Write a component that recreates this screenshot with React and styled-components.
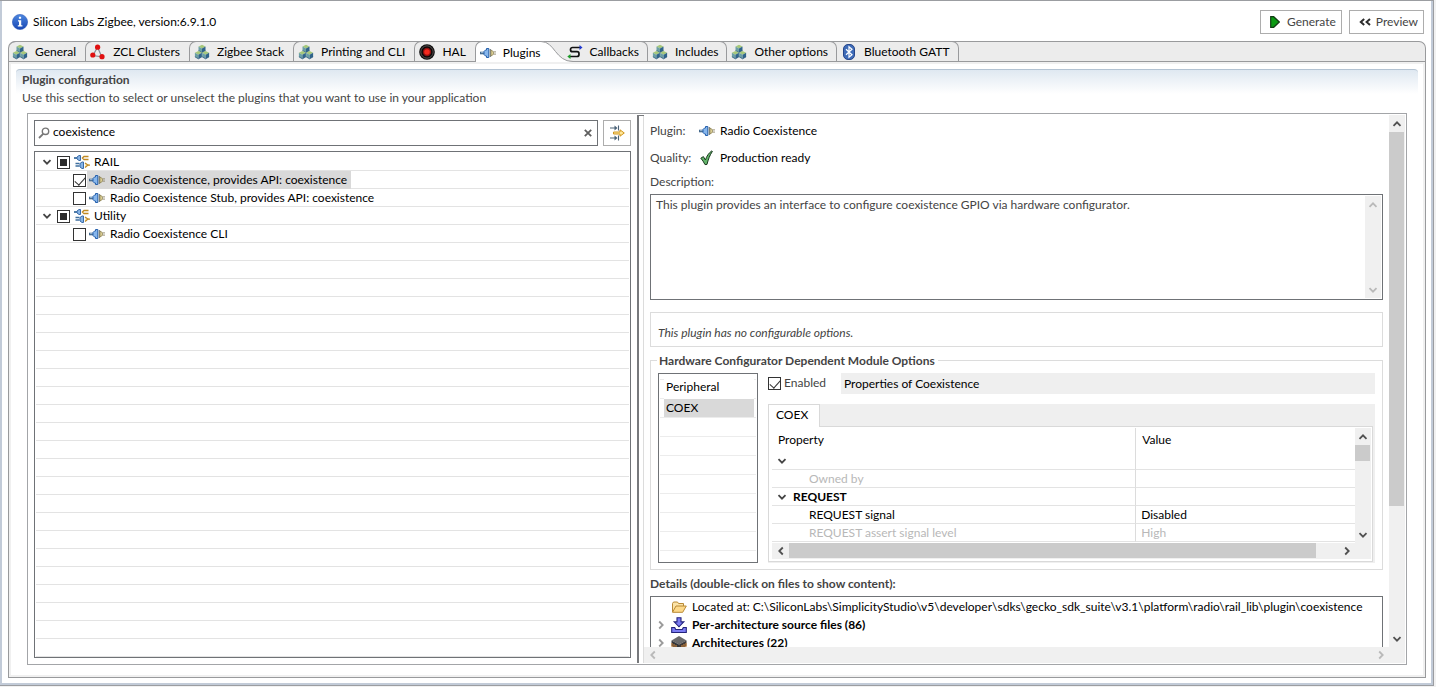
import React from 'react';
import styled, { createGlobalStyle, css } from 'styled-components';

const GlobalStyle = createGlobalStyle`
  * { box-sizing: border-box; }
  body {
    margin: 0;
    background: #f1f1f1;
    color: #000;
    font: 12px/18px Lato, "Open Sans", sans-serif;
  }
  button, input, textarea { font: inherit; color: inherit; margin: 0; }
  svg { display: block; flex: none; }
`;

const line = '#e3e3e3';
const frame = '#999a9c';
const well = '#6f7276';
const label = '#444';

/* ---------- icons ---------- */

const InfoIcon = () => (
  <svg width="16" height="16" viewBox="0 0 16 16">
    <defs>
      <linearGradient id="info" x1="0" y1="0" x2="0" y2="1">
        <stop offset="0" stopColor="#4d88e0" />
        <stop offset="1" stopColor="#1746b4" />
      </linearGradient>
    </defs>
    <circle cx="8" cy="8" r="7.6" fill="url(#info)" stroke="#2a58b8" strokeWidth=".6" />
    <path d="M6.9 2.800h2.200v2H6.900zM6 6.200h3.200v5H10.400v1.300H5.800v-1.300h1.200V7.400H6z" fill="#fff" />
  </svg>
);

const Cube = ({ x, y }) => (
  <g transform={`translate(${x} ${y})`}>
    <path d="M0 2L3.500 .2 7 2 3.500 4z" fill="#a6c87a" />
    <path d="M0 2l3.500 2v4L0 6z" fill="#6b9fa4" />
    <path d="M7 2L3.500 4v4L7 6z" fill="#2f648a" />
    <path d="M0 6l3.500 2L7 6" fill="none" stroke="#27557c" strokeWidth=".8" />
  </g>
);

const CubesIcon = () => (
  <svg width="16" height="16" viewBox="0 0 16 16">
    <Cube x={4.5} y={0.6} />
    <Cube x={0.9} y={6.8} />
    <Cube x={8.1} y={6.8} />
  </svg>
);

const ClusterIcon = () => (
  <svg width="16" height="16" viewBox="0 0 16 16">
    <path d="M7.500 3.200L2.800 11.600l9 1.200z" fill="none" stroke="#8a8f98" strokeWidth="1.200" />
    <circle cx="7.600" cy="3.200" r="2.600" fill="#e01010" />
    <circle cx="2.800" cy="11" r="2.600" fill="#e01010" />
    <circle cx="12" cy="12.700" r="2.600" fill="#e01010" />
  </svg>
);

const HalIcon = () => (
  <svg width="16" height="16" viewBox="0 0 16 16">
    <circle cx="8" cy="8" r="7.800" fill="#0a0a0a" />
    <circle cx="8" cy="8" r="6.200" fill="none" stroke="#6d6262" strokeWidth=".8" />
    <circle cx="8" cy="8" r="4.200" fill="#8e0f0f" />
    <circle cx="8" cy="8" r="2.800" fill="#f42a1f" />
  </svg>
);

const PlugIcon = () => (
  <svg width="16" height="16" viewBox="0 0 16 16">
    <path d="M0 8h5" stroke="#45698c" strokeWidth="2.600" />
    <path d="M1 7.600h4" stroke="#a9c6e4" strokeWidth=".8" />
    <path d="M4 6.500l1.500-1.500h1V3.500h2.300v9H6.500V11h-1L4 9.500z" fill="#86b6ec" stroke="#2660ac" />
    <path d="M10.300 3.900v8.200" stroke="#6c7a80" strokeWidth="1.200" />
    <path d="M11 5l2.300 1.600v2.800L11 11z" fill="#ecdfa0" stroke="#8f8458" strokeWidth=".9" />
    <path d="M13.500 6.900H16M13.500 9.100H16" stroke="#8b8268" strokeWidth=".9" />
  </svg>
);

const PlugGroupIcon = () => (
  <svg width="16" height="16" viewBox="0 0 16 16">
    <path d="M0 4h3" stroke="#3f6f9e" strokeWidth="1.800" />
    <path d="M3 3l2-1.500h1.500v5H5L3 5z" fill="#86b4e6" stroke="#3a6ba8" />
    <path d="M14.500 2.500H10L8.500 4 10 5.500h4.500" fill="none" stroke="#c08a24" strokeWidth="1.400" />
    <path d="M1.500 9.500h4M1.500 12h4" stroke="#3f6f9e" strokeWidth="1.300" />
    <path d="M6 9.500L8 8h1.500v6.500H8L6 13z" fill="#86b4e6" stroke="#3a6ba8" />
    <path d="M11 9l3 2-3 2.500" fill="#f6e9bb" stroke="#c08a24" strokeWidth="1.200" />
    <path d="M14 11.200h2" stroke="#c08a24" strokeWidth="1.200" />
  </svg>
);

const CallbackIcon = () => (
  <svg width="16" height="16" viewBox="0 0 16 16">
    <path d="M13 3.500H5.500a2 2 0 0 0-2 2v.2a2 2 0 0 0 2 2H10a2 2 0 0 1 2 2v.8a2 2 0 0 1-2 2H3" fill="none" stroke="#111" strokeWidth="1.700" />
    <path d="M12.500 1l3 2.500-3 2.500z" fill="#2038d0" />
    <path d="M3.500 10L.3 12.500l3.200 2.500z" fill="#1c9a28" />
  </svg>
);

const BluetoothIcon = () => (
  <svg width="16" height="16" viewBox="0 0 16 16">
    <rect x="2.500" y=".5" width="11" height="15" rx="4.500" fill="#3f6cb8" stroke="#27468a" />
    <path d="M5 5.200l6 5.600L8 13.300V2.700l3 2.500-6 5.600" fill="none" stroke="#fff" strokeWidth="1.200" />
  </svg>
);

const PlayIcon = () => (
  <svg width="10" height="12" viewBox="0 0 10 12">
    <path d="M.7.7h3L9.300 6 3.700 11.300h-3z" fill="#0c9a12" stroke="#123d14" strokeWidth="1.200" />
  </svg>
);

const RewindIcon = () => (
  <svg width="12" height="8" viewBox="0 0 12 8">
    <path d="M5.200 1L1.800 4l3.400 3M11 1L7.600 4 11 7" fill="none" stroke="#2d2d2d" strokeWidth="2" />
  </svg>
);

const SearchIcon = () => (
  <svg width="12" height="12" viewBox="0 0 12 12">
    <circle cx="7.500" cy="4.300" r="3.200" fill="none" stroke="#777" strokeWidth="1.400" />
    <path d="M5.200 6.800L1 11" stroke="#777" strokeWidth="1.800" />
  </svg>
);

const CloseIcon = () => (
  <svg width="8" height="8" viewBox="0 0 8 8">
    <path d="M.8.8l6.400 6.400M7.200.8L.8 7.200" stroke="#5f5f5f" strokeWidth="1.800" />
  </svg>
);

const ExpandAllIcon = () => (
  <svg width="16" height="16" viewBox="0 0 16 16">
    <path d="M1 3h6M1 13h6M9.500 .500v5M9.500 10.500v5" stroke="#4b6277" strokeWidth="1.100" />
    <path d="M5.500 .500L8.500 3 5.500 5.500zM5.500 10.500l3 2.500-3 2.500z" fill="#4b6277" />
    <path d="M4.500 7h6.500V4.800L15.300 8 11 11.200V9H4.500z" fill="#ffe79a" stroke="#d0941c" strokeWidth="1" />
  </svg>
);

const QualityIcon = () => (
  <svg width="16" height="16" viewBox="0 0 16 16">
    <path d="M1.800 8.200l2.600-1.600 2 3.400C7.600 6.400 9.600 3 12.800.9l.6.500C10.800 5 9.200 9.600 8 14.400L6 14.600C4.800 12 3.400 10 1.800 8.200z" fill="#62b46a" stroke="#1c3a20" />
  </svg>
);

const FolderIcon = () => (
  <svg width="16" height="16" viewBox="0 0 16 16">
    <path d="M1.500 13V4.500l1-1.500h4l1 1.500h5V7" fill="#fbe3a8" stroke="#b98a35" />
    <path d="M1.500 13.300L5 7h10.300l-3.600 6.300z" fill="#fdd98a" stroke="#b98a35" />
  </svg>
);

const DownloadIcon = () => (
  <svg width="16" height="16" viewBox="0 0 16 16">
    <path d="M.7 10.500h3l1 2h6.600l1-2h3v5H.7z" fill="#7b7bf2" stroke="#23237c" strokeWidth="1.100" />
    <path d="M6 .7h4v4.200h2.800L8 9.800 3.200 4.900H6z" fill="#7b7bf2" stroke="#23237c" strokeWidth="1.100" />
  </svg>
);

const ChipIcon = () => (
  <svg width="16" height="16" viewBox="0 0 16 16">
    <path d="M.5 5.500L8 1l7.500 4.500L8 9.500z" fill="#6a6a6a" />
    <path d="M.5 5.500L8 9.500v6L.5 11z" fill="#33363a" />
    <path d="M15.500 5.500L8 9.500v6l7.500-4.500z" fill="#3f3a38" />
    <path d="M1 8v4M3 9v4M5 10v4M11 10v4M13 9v4M15 8v4" stroke="#d98a3a" />
  </svg>
);

const turns = { down: 0, left: 90, up: 180, right: 270 };
const Chevron = ({ dir = 'down', color = '#444' }) => (
  <svg width="10" height="10" viewBox="0 0 10 10">
    <path d="M1.500 3.200L5 6.700l3.500-3.500" fill="none" stroke={color} strokeWidth="1.800" transform={`rotate(${turns[dir]} 5 5)`} />
  </svg>
);

/* ---------- window ---------- */

const Page = styled.div`
  display: flex;
  height: 100vh;
  padding: 0 2px 1px 0;
`;

const Window = styled.main`
  flex: 1;
  min-width: 0;
  display: flex;
  border: solid #9b9da1;
  border-width: 1px 1px 1px 0;
`;

const WindowBody = styled.div`
  flex: 1;
  min-width: 0;
  display: flex;
  flex-direction: column;
  padding: 0 5px 5px 6px;
  background: #fff;
  border: solid #c2cbd8;
  border-width: 0 2px 2px;
`;

const Header = styled.header`
  display: flex;
  align-items: flex-start;
  gap: 7px;
  height: 40px;
  padding: 9px 2px 0 4px;
`;

const Title = styled.h1`
  display: flex;
  align-items: center;
  gap: 5px;
  margin: 0 auto 0 0;
  height: 24px;
  font-size: 12px;
  font-weight: 400;
`;

const ToolButton = styled.button`
  display: flex;
  align-items: center;
  justify-content: center;
  height: 24px;
  padding: 0 5px 0 9px;
  gap: ${p => p.$gap}px;
  background: #fff;
  border: 1px solid #adadad;
  color: ${label};
`;

/* ---------- tabs ---------- */

const TabBar = styled.nav`
  display: flex;
  height: 21px;
  flex: none;
  background: #ececec;
  border: 1px solid ${frame};
  border-bottom: 0;
  border-radius: 7px 7px 0 0;
`;

const TabButton = styled.button`
  display: flex;
  align-items: center;
  gap: 7px;
  margin-top: -1px;
  padding: 1px 9px 0 4px;
  background: none;
  border: 0 solid ${frame};
  border-top-width: 1px;
  border-bottom-width: 1px;
  white-space: nowrap;
  ${p => p.$side === 'first' && css`border-top-left-radius: 7px; padding-left: 3px;`}
  ${p => p.$side === 'left' && css`border-left-width: 1px; border-top-left-radius: 7px;`}
  ${p => p.$side === 'right' && css`border-right-width: 1px; border-top-right-radius: 7px; padding-right: 8px;`}
  ${p => p.$side === 'active' && css`
    border-left-width: 1px;
    border-bottom-width: 0;
    border-top-left-radius: 7px;
    background: #fff;
    padding-right: 0;
  `}
`;

const TabCurve = styled.svg`
  margin: -1px -10px 0 0;
  z-index: 1;
  overflow: visible;
`;

const TabBarRest = styled.span`
  flex: 1;
  border-bottom: 1px solid ${frame};
`;

const TabBody = styled.div`
  flex: 1;
  min-height: 0;
  display: flex;
  flex-direction: column;
  border: 1px solid ${frame};
  border-top: 0;
  padding: 2px;
  background: #f0f0f0;
`;

const Section = styled.section`
  flex: 1;
  min-height: 0;
  display: flex;
  flex-direction: column;
  padding: 5px 5px 10px;
  background: #fff;
`;

const SectionHead = styled.div`
  padding: 1px 6px 6px;
  border-top: 1px solid #b3c3d3;
  border-radius: 4px 4px 0 0;
  background: linear-gradient(#dfe8f1, #fff 24px);
  color: ${label};
`;

const SectionTitle = styled.h2`
  margin: 0;
  font-size: 12px;
  line-height: 18px;
`;

const SectionText = styled.p`
  margin: 0;
`;

const Panel = styled.div`
  flex: 1;
  min-height: 0;
  display: grid;
  grid-template-columns: 609fr 769fr;
  margin: 0 11px;
  border: 1px solid #a3a5a8;
`;

/* ---------- plugin tree ---------- */

const PluginColumn = styled.div`
  min-width: 0;
  display: flex;
  flex-direction: column;
  gap: 5px;
  padding: 6px;
`;

const SearchRow = styled.div`
  display: flex;
  gap: 5px;
`;

const SearchBox = styled.label`
  flex: 1;
  display: flex;
  align-items: center;
  gap: 3px;
  height: 26px;
  padding: 0 4px 0 3px;
  border: 1px solid ${well};
`;

const SearchInput = styled.input`
  flex: 1;
  min-width: 0;
  height: 22px;
  padding: 0 0 4px;
  border: 0;
  outline: 0;
  background: none;
`;

const ClearButton = styled.button`
  padding: 1px;
  border: 0;
  background: none;
`;

const ExpandButton = styled.button`
  display: flex;
  align-items: center;
  justify-content: center;
  width: 28px;
  height: 26px;
  padding: 0;
  background: #fff;
  border: 1px solid #adadad;
`;

const Tree = styled.ul`
  flex: 1;
  margin: 0;
  padding: 1px 1px 0;
  list-style: none;
  border: 1px solid ${well};
  background: linear-gradient(transparent 17px, ${line} 17px) 0 0 / 100% 18px content-box;
`;

const TreeItem = styled.li`
  display: flex;
  align-items: center;
  height: 18px;
  padding-left: ${p => (p.$child ? 37 : 6)}px;
`;

const Twisty = styled.button`
  width: 10px;
  margin-right: 5px;
  padding: 0;
  border: 0;
  background: none;
`;

const TreeLabel = styled.label`
  display: flex;
  align-items: center;
  gap: ${p => (p.$child ? 5 : 4)}px;
  height: 18px;
  margin-left: 1px;
  padding: 0 4px 0 ${p => (p.$child ? 2 : 3)}px;
  background: ${p => (p.$selected ? '#d9d9d9' : 'none')};
  white-space: nowrap;
`;

const Check = styled.input.attrs({ type: 'checkbox' })`
  appearance: none;
  flex: none;
  width: 13px;
  height: 13px;
  border: 1px solid #333;
  background: #fff;
  &:checked::before {
    content: '';
    display: block;
    width: 5px;
    height: 9px;
    margin: 0 0 0 3px;
    border: solid #333;
    border-width: 0 1px 1px 0;
    transform: rotate(42deg);
  }
  &:indeterminate::before {
    content: '';
    display: block;
    width: 7px;
    height: 7px;
    margin: 2px;
    border: 0;
    background: #2b2b2b;
    transform: none;
  }
`;

/* ---------- scroll bars ---------- */

const Bar = styled.div`
  display: flex;
  flex-direction: ${p => (p.$vertical ? 'column' : 'row')};
  ${p => (p.$vertical ? 'width' : 'height')}: 16px;
  flex: none;
  background: #f0f0f0;
`;

const BarArrow = styled.button`
  display: flex;
  align-items: center;
  justify-content: center;
  width: ${p => (p.$vertical ? 16 : 17)}px;
  height: ${p => (p.$vertical ? 17 : 16)}px;
  flex: none;
  padding: 0;
  border: 0;
  background: none;
`;

const BarTrack = styled.div`
  flex: 1;
  display: flex;
  flex-direction: inherit;
`;

const BarThumb = styled.div`
  flex: 0 0 ${p => p.$size}%;
  ${p => (p.$vertical ? 'width' : 'height')}: 15px;
  background: #cbcbcb;
`;

function ScrollBar({ vertical, thumb = 0, disabled }) {
  const color = disabled ? '#b9b9b9' : '#505050';
  return (
    <Bar $vertical={vertical}>
      <BarArrow $vertical={vertical} disabled={disabled} aria-label={vertical ? 'Scroll up' : 'Scroll left'}>
        <Chevron dir={vertical ? 'up' : 'left'} color={color} />
      </BarArrow>
      <BarTrack><BarThumb $vertical={vertical} $size={thumb} /></BarTrack>
      <BarArrow $vertical={vertical} disabled={disabled} aria-label={vertical ? 'Scroll down' : 'Scroll right'}>
        <Chevron dir={vertical ? 'down' : 'right'} color={color} />
      </BarArrow>
    </Bar>
  );
}

/* ---------- details pane ---------- */

const DetailPane = styled.div`
  min-width: 0;
  min-height: 0;
  display: grid;
  grid-template-columns: 7px minmax(0, 1fr) 16px;
  grid-template-rows: minmax(0, 1fr) 16px;
  padding: 1px 1px 1px 0;
`;

const Sash = styled.div`
  grid-row: 1 / 3;
  border: solid #77797c;
  border-width: 1px 0 0 2px;
  background: linear-gradient(#dcdcdc, #dcdcdc) right / 1px 100% no-repeat;
`;

const Viewport = styled.div`
  overflow: hidden;
  padding: 7px 6px 0;
`;

const PaneCorner = styled.div`
  background: #f0f0f0;
`;

const Facts = styled.dl`
  display: grid;
  grid-template-columns: 49px auto;
  row-gap: 9px;
  margin: 0 0 6px;
`;

const FactName = styled.dt`
  color: ${label};
`;

const FactValue = styled.dd`
  display: flex;
  align-items: center;
  gap: 5px;
  margin: 0;
`;

const FieldLabel = styled.label`
  display: block;
  margin-bottom: 3px;
  color: ${label};
  font-weight: ${p => (p.$strong ? 700 : 400)};
`;

const DescriptionBox = styled.div`
  display: flex;
  height: 106px;
  padding: 1px;
  border: 1px solid ${well};
`;

const Description = styled.textarea`
  flex: 1;
  padding: 0 4px;
  border: 0;
  outline: 0;
  resize: none;
  overflow: hidden;
  color: ${label};
`;

const OptionsNote = styled.p`
  margin: 12px 0 4px;
  padding: 11px 7px 4px;
  border: 1px solid #dcdcdc;
  font-style: italic;
  color: ${label};
`;

const HardwareGroup = styled.fieldset`
  display: grid;
  grid-template-columns: 100px minmax(0, 1fr);
  column-gap: 10px;
  min-width: 0;
  margin: 0 0 5px;
  padding: 4px 7px 6px;
  border: 1px solid #dcdcdc;
`;

const GroupTitle = styled.legend`
  margin-left: -1px;
  padding: 1px 3px 0 2px;
  line-height: 17px;
  color: ${label};
  font-weight: 700;
`;

const PeripheralList = styled.div`
  height: 190px;
  padding: 3px 3px 3px 5px;
  border: 1px solid ${well};
  background: linear-gradient(transparent 18px, #ececec 18px) 1px 6px / 96px 19px repeat-y;
`;

const PeripheralHead = styled.div`
  height: 22px;
  padding: 1px 2px 0;
  background: #fff;
`;

const PeripheralRow = styled.button`
  display: block;
  width: 100%;
  height: 18px;
  padding: 0 2px;
  border: 0;
  background: #d9d9d9;
  text-align: left;
`;

const PropertyColumn = styled.div`
  display: flex;
  flex-direction: column;
  gap: 10px;
`;

const EnabledRow = styled.div`
  display: flex;
  align-items: flex-start;
  gap: 15px;
`;

const EnabledLabel = styled.label`
  display: flex;
  align-items: center;
  gap: 3px;
  width: 58px;
  height: 20px;
  color: ${label};
`;

const PropertiesTitle = styled.div`
  flex: 1;
  height: 21px;
  padding: 2px 3px;
  background: #efefef;
`;

const PropertyTabs = styled.div`
  flex: 1;
  display: flex;
  flex-direction: column;
  padding-right: 2px;
  background: #efefef;
`;

const PropertyTab = styled.button`
  align-self: flex-start;
  height: 23px;
  margin-bottom: -1px;
  padding: 0 11px 2px 7px;
  border: 1px solid #d9d9d9;
  border-bottom: 0;
  background: #fff;
  z-index: 1;
`;

const PropertyBody = styled.div`
  display: grid;
  grid-template-columns: minmax(0, 1fr) 16px;
  grid-template-rows: 115px 16px;
  padding: 1px 1px 2px 3px;
  border: 1px solid #d9d9d9;
  background: #fff;
`;

const TableClip = styled.div`
  overflow: hidden;
`;

const PropertyTable = styled.table`
  width: 100%;
  table-layout: fixed;
  border-collapse: separate;
  border-spacing: 0;
`;

const HeadCell = styled.th`
  height: 24px;
  width: ${p => p.$width};
  padding: 0 6px;
  border-left: ${p => (p.$divided ? '1px solid #dcdcdc' : '0')};
  font-weight: 400;
  text-align: left;
`;

const Cell = styled.td`
  height: 18px;
  padding: 0 5px 0 ${p => p.$indent || 5}px;
  line-height: 17px;
  border-bottom: 1px solid ${line};
  border-left: ${p => (p.$divided ? '1px solid #dcdcdc' : '0')};
  color: ${p => (p.$muted ? '#b8b8b8' : '#000')};
  font-weight: ${p => (p.$strong ? 700 : 400)};
`;

const CellGroup = styled.span`
  display: flex;
  align-items: center;
  gap: 6px;
`;

const FileList = styled.ul`
  margin: 0;
  padding: 1px 0;
  list-style: none;
  border: 1px solid ${well};
`;

const FileRow = styled.li`
  display: grid;
  grid-template-columns: 10px 16px auto;
  column-gap: 5px;
  align-items: center;
  height: 18px;
  padding-left: 5px;
  white-space: nowrap;
  font-weight: ${p => (p.$strong ? 700 : 400)};
`;

/* ---------- data ---------- */

const tabsBefore = [
  ['General', CubesIcon],
  ['ZCL Clusters', ClusterIcon],
  ['Zigbee Stack', CubesIcon],
  ['Printing and CLI', CubesIcon],
  ['HAL', HalIcon],
];
const tabsAfter = [
  ['Callbacks', CallbackIcon],
  ['Includes', CubesIcon],
  ['Other options', CubesIcon],
  ['Bluetooth GATT', BluetoothIcon],
];

const plugins = [
  { name: 'RAIL', group: true },
  { name: 'Radio Coexistence, provides API: coexistence', checked: true, selected: true },
  { name: 'Radio Coexistence Stub, provides API: coexistence' },
  { name: 'Utility', group: true },
  { name: 'Radio Coexistence CLI' },
];

const properties = [
  { name: '', group: true },
  { name: 'Owned by', muted: true },
  { name: 'REQUEST', group: true },
  { name: 'REQUEST signal', value: 'Disabled' },
  { name: 'REQUEST assert signal level', value: 'High', muted: true },
];

const files = [
  { name: 'Located at: C:\\SiliconLabs\\SimplicityStudio\\v5\\developer\\sdks\\gecko_sdk_suite\\v3.1\\platform\\radio\\rail_lib\\plugin\\coexistence', Icon: FolderIcon },
  { name: 'Per-architecture source files (86)', Icon: DownloadIcon, group: true },
  { name: 'Architectures (22)', Icon: ChipIcon, group: true },
];

const markMixed = el => { if (el) el.indeterminate = true; };

function PluginRow({ item }) {
  const id = `plugin-${item.name.replace(/\W+/g, '-')}`;
  return (
    <TreeItem $child={!item.group}>
      {item.group && <Twisty aria-label={`Collapse ${item.name}`}><Chevron /></Twisty>}
      <Check id={id} ref={item.group ? markMixed : undefined} defaultChecked={item.checked} />
      <TreeLabel htmlFor={id} $child={!item.group} $selected={item.selected}>
        {item.group ? <PlugGroupIcon /> : <PlugIcon />}
        {item.name}
      </TreeLabel>
    </TreeItem>
  );
}

function Tabs() {
  return (
    <TabBar>
      {tabsBefore.map(([name, Icon], i) => (
        <TabButton key={name} $side={i ? 'left' : 'first'}><Icon />{name}</TabButton>
      ))}
      <TabButton $side="active"><PlugIcon />Plugins</TabButton>
      <TabCurve width="32" height="21" viewBox="0 0 32 21">
        <path d="M0 .5C14 .5 14 20.500 32 20.500V21H0z" fill="#fff" />
        <path d="M0 .5C14 .5 14 20.500 32 20.500" fill="none" stroke={frame} />
      </TabCurve>
      {tabsAfter.map(([name, Icon]) => (
        <TabButton key={name} $side="right"><Icon />{name}</TabButton>
      ))}
      <TabBarRest />
    </TabBar>
  );
}

function Hardware() {
  return (
    <HardwareGroup>
      <GroupTitle>Hardware Configurator Dependent Module Options</GroupTitle>
      <PeripheralList>
        <PeripheralHead>Peripheral</PeripheralHead>
        <PeripheralRow>COEX</PeripheralRow>
      </PeripheralList>
      <PropertyColumn>
        <EnabledRow>
          <EnabledLabel><Check defaultChecked />Enabled</EnabledLabel>
          <PropertiesTitle>Properties of Coexistence</PropertiesTitle>
        </EnabledRow>
        <PropertyTabs>
          <PropertyTab>COEX</PropertyTab>
          <PropertyBody>
            <TableClip>
              <PropertyTable>
                <thead>
                  <tr>
                    <HeadCell $width="62.3%">Property</HeadCell>
                    <HeadCell $divided>Value</HeadCell>
                  </tr>
                </thead>
                <tbody>
                  {properties.map(p => (
                    <tr key={p.name}>
                      <Cell $muted={p.muted} $strong={p.group} $indent={p.group ? 5 : 37}>
                        {p.group ? <CellGroup><Chevron />{p.name}</CellGroup> : p.name}
                      </Cell>
                      <Cell $divided $muted={p.muted}>{p.value}</Cell>
                    </tr>
                  ))}
                </tbody>
              </PropertyTable>
            </TableClip>
            <ScrollBar vertical thumb={20} />
            <ScrollBar thumb={96} />
            <PaneCorner />
          </PropertyBody>
        </PropertyTabs>
      </PropertyColumn>
    </HardwareGroup>
  );
}

function Details() {
  return (
    <DetailPane>
      <Sash />
      <Viewport>
        <Facts>
          <FactName>Plugin:</FactName>
          <FactValue><PlugIcon />Radio Coexistence</FactValue>
          <FactName>Quality:</FactName>
          <FactValue><QualityIcon />Production ready</FactValue>
        </Facts>
        <FieldLabel htmlFor="description">Description:</FieldLabel>
        <DescriptionBox>
          <Description
            id="description"
            readOnly
            value="This plugin provides an interface to configure coexistence GPIO via hardware configurator."
          />
          <ScrollBar vertical disabled />
        </DescriptionBox>
        <OptionsNote>This plugin has no configurable options.</OptionsNote>
        <Hardware />
        <FieldLabel as="div" $strong>Details (double-click on files to show content):</FieldLabel>
        <FileList>
          {files.map(({ name, Icon, group }) => (
            <FileRow key={name} $strong={group}>
              {group ? <Chevron dir="right" color="#9a9a9a" /> : <span />}
              <Icon />
              {name}
            </FileRow>
          ))}
        </FileList>
      </Viewport>
      <ScrollBar vertical thumb={75} />
      <ScrollBar disabled />
      <PaneCorner />
    </DetailPane>
  );
}

export default function App() {
  return (
    <Page>
      <GlobalStyle />
      <Window>
        <WindowBody>
          <Header>
            <Title><InfoIcon />Silicon Labs Zigbee, version:6.9.1.0</Title>
            <ToolButton $gap={7}><PlayIcon />Generate</ToolButton>
            <ToolButton $gap={5}><RewindIcon />Preview</ToolButton>
          </Header>
          <Tabs />
          <TabBody>
            <Section>
              <SectionHead>
                <SectionTitle>Plugin configuration</SectionTitle>
                <SectionText>Use this section to select or unselect the plugins that you want to use in your application</SectionText>
              </SectionHead>
              <Panel>
                <PluginColumn>
                  <SearchRow>
                    <SearchBox>
                      <SearchIcon />
                      <SearchInput aria-label="Filter plugins" defaultValue="coexistence" />
                      <ClearButton aria-label="Clear"><CloseIcon /></ClearButton>
                    </SearchBox>
                    <ExpandButton aria-label="Expand all"><ExpandAllIcon /></ExpandButton>
                  </SearchRow>
                  <Tree>
                    {plugins.map(item => <PluginRow key={item.name} item={item} />)}
                  </Tree>
                </PluginColumn>
                <Details />
              </Panel>
            </Section>
          </TabBody>
        </WindowBody>
      </Window>
    </Page>
  );
}
